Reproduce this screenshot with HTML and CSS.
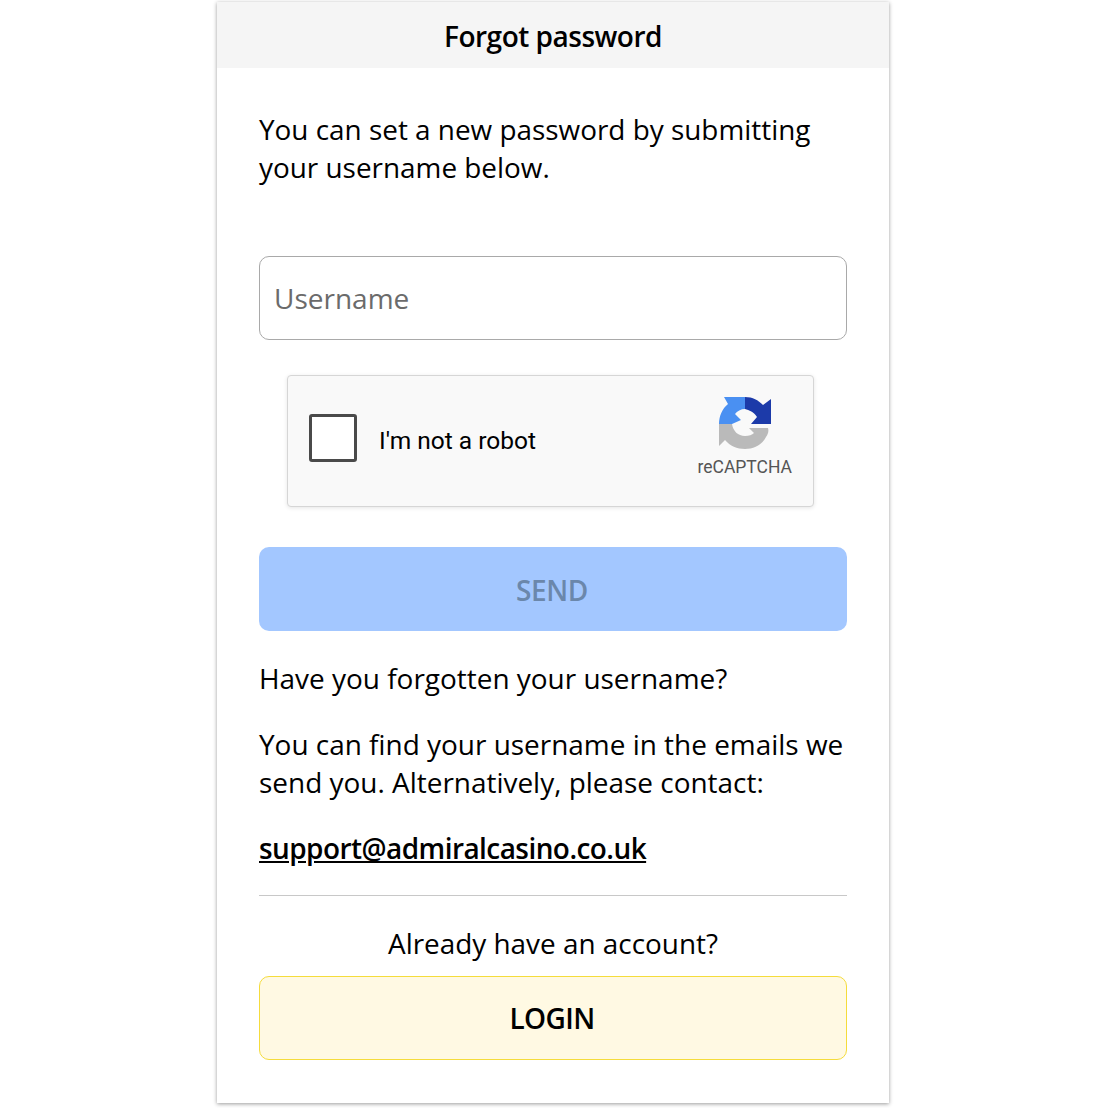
FILE: index.html
```html
<!DOCTYPE html>
<html lang="en">
<head>
    <meta charset="UTF-8">
    <meta name="viewport" content="width=device-width, initial-scale=1.0">
    <title>Forgot password</title>
    <link rel="stylesheet" href="styles.css">
</head>
<body>
    <div class="card">
        <div class="card-header">Forgot password</div>
        <div class="card-body">
            <p class="intro">You can set a new password by submitting your username below.</p>
            <input class="username" type="text" placeholder="Username">
            <div class="captcha">
                <div class="captcha-box"></div>
                <div class="captcha-label">I'm not a robot</div>
                <div class="captcha-brand">
                    <svg class="captcha-logo" viewBox="0 0 54 54" width="54" height="54">
                        <path fill="#4a90f2" d="M1 28 C1 20 4 13 10 8 L6 1 H27 V13 C23 13 19 15 17 18 L23 24 L14 28 Z"/>
                        <path fill="#1c3aa9" d="M27 1 C35 1 40 4 45 9 L53 3 V28 H33 L39 21 C36 16 31 14 27 13 Z"/>
                        <path fill="#bababa" d="M1 28 H14 C15 35 20 40 27 40 C31 40 34 39 36 37 L31 32 H50 C51 35 50 38 48 41 C44 49 36 53 27 53 C19 53 12 50 7 44 L1 50 Z"/>
                    </svg>
                    <span class="captcha-name">reCAPTCHA</span>
                </div>
            </div>
            <button class="send" type="button"><span class="send-label">SEND</span></button>
            <p class="text first">Have you forgotten your username?</p>
            <p class="text">You can find your username in the emails we send you. Alternatively, please contact:</p>
            <p class="text"><a class="mail" href="#">support@admiralcasino.co.uk</a></p>
            <hr class="divider">
            <p class="already">Already have an account?</p>
            <button class="login" type="button"><span class="login-label">LOGIN</span></button>
        </div>
    </div>
</body>
</html>
```

FILE: styles.css
```css
html, body {
    margin: 0;
    padding: 0;
    background: #fff;
}
body {
    min-height: 1108px;
    font-family: "Open Sans", sans-serif;
    color: #000;
}
.card {
    width: 672px;
    height: 1101px;
    margin: 2px 0 0 217px;
    background: #fff;
    box-shadow: 0 1px 4px rgba(0, 0, 0, 0.4);
}
.card-header {
    height: 66px;
    line-height: 68px;
    text-align: center;
    font-size: 28px;
    font-weight: 600;
    letter-spacing: -0.5px;
    background: #f5f5f5;
}
.card-body {
    padding: 42px 42px 0;
    display: flex;
    flex-direction: column;
}
.intro {
    margin: 0 0 70px;
    font-size: 27.9px;
    line-height: 38px;
}
.username {
    box-sizing: border-box;
    height: 84px;
    padding: 0 14px;
    font-family: inherit;
    font-size: 28px;
    border: 1px solid #a9a9a9;
    border-radius: 10px;
    outline: none;
}
.username::placeholder {
    color: #6b6b6b;
    opacity: 1;
}
.captcha {
    box-sizing: border-box;
    width: 527px;
    height: 132px;
    margin: 35px 0 40px 28px;
    display: flex;
    align-items: center;
    padding: 0 21px;
    background: #f9f9f9;
    border: 1px solid #d6d6d6;
    border-radius: 4px;
    box-shadow: 0 1px 4px rgba(0, 0, 0, 0.1);
}
.captcha-box {
    box-sizing: border-box;
    width: 48px;
    height: 48px;
    background: #fff;
    border: 3px solid #4a4a4a;
    border-radius: 3px;
    margin-top: -7px;
}
.captcha-label {
    margin: -2px 0 0 22px;
    font-family: Roboto, sans-serif;
    font-size: 24.5px;
    flex: 1;
}
.captcha-brand {
    display: flex;
    flex-direction: column;
    align-items: center;
    margin-top: -8px;
}
.captcha-logo {
    display: block;
    margin: -1px 0 0 1px;
}
.captcha-name {
    margin-top: 6px;
    font-family: Roboto, sans-serif;
    font-size: 17.5px;
    line-height: 22px;
    color: #555;
}
.send {
    height: 84px;
    font-family: inherit;
    font-size: 28px;
    font-weight: 600;
    letter-spacing: -0.4px;
    color: #6b87ab;
    background: #a3c7ff;
    border: 0;
    border-radius: 10px;
}
.send-label {
    display: block;
    margin: 1px 2px 0 0;
}
.text {
    margin: 0 0 28px;
    font-size: 27.95px;
    line-height: 38px;
}
.text.first {
    margin-top: 28px;
}
.mail {
    color: #000;
    font-weight: 600;
    letter-spacing: -0.54px;
}
.divider {
    width: 100%;
    margin: 0;
    border: 0;
    border-top: 1px solid #c8c8c8;
}
.already {
    margin: 28px 0 14px;
    font-size: 27.9px;
    line-height: 38px;
    text-align: center;
}
.login {
    height: 84px;
    font-family: inherit;
    font-size: 28px;
    font-weight: 600;
    letter-spacing: -0.6px;
    color: #000;
    background: #fff9e3;
    border: 1px solid #f5dc3c;
    border-radius: 10px;
}
.login-label {
    display: block;
    margin-right: 2px;
}
```
